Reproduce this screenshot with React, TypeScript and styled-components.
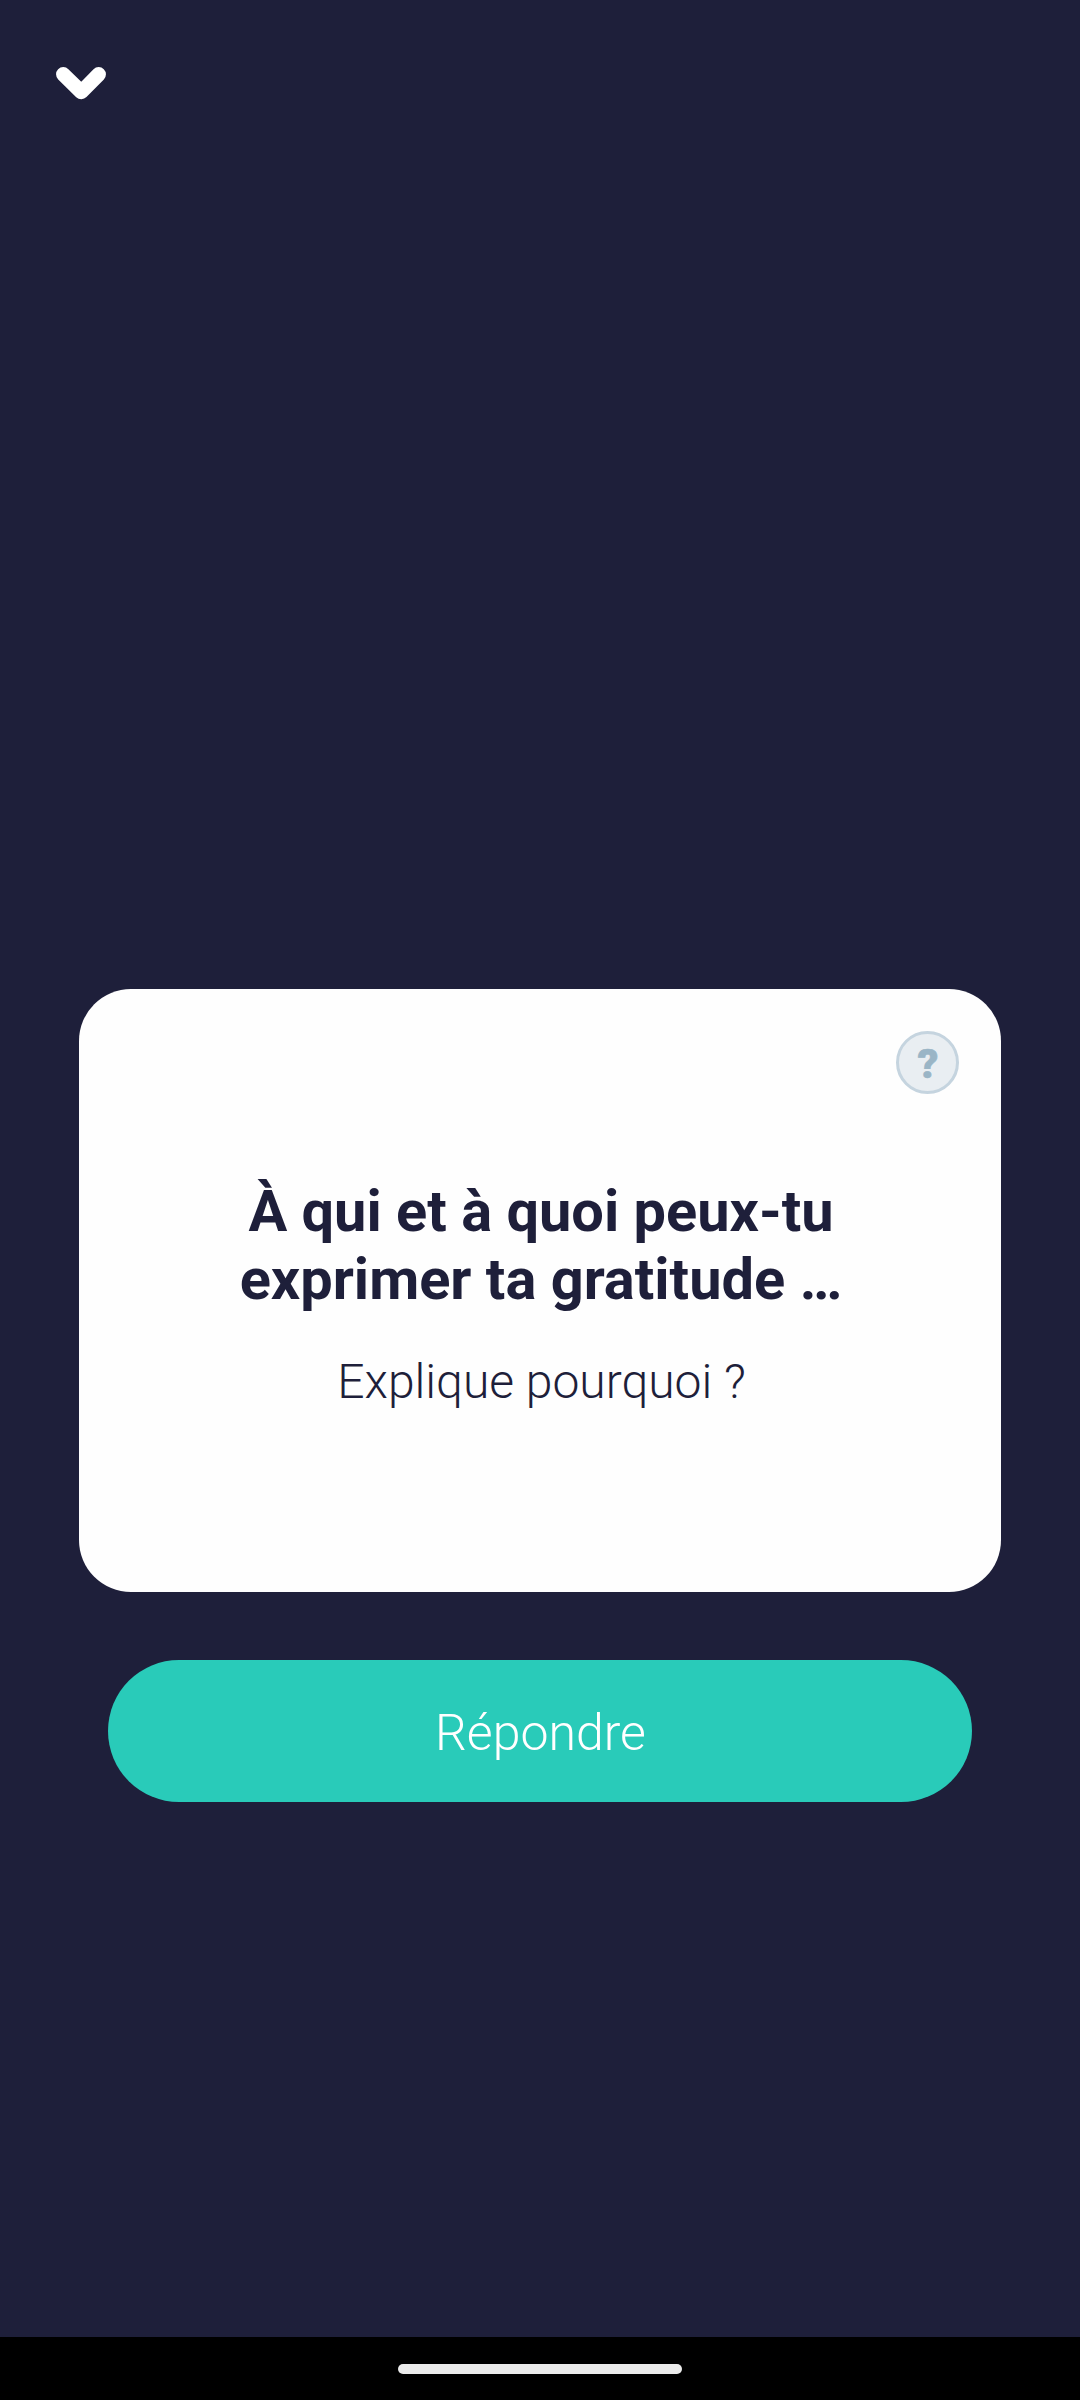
import React from "react";
import styled, { createGlobalStyle } from "styled-components";

const GlobalStyle = createGlobalStyle`
  *, *::before, *::after { box-sizing: border-box; }
  body { margin: 0; background: #1e1f3a; }
`;

const Screen = styled.div`
  display: flex;
  flex-direction: column;
  width: 1080px;
  height: 2400px;
  background: #1e1f3a;
  font-family: Roboto, "Noto Sans", sans-serif;
`;

const TopBar = styled.header`
  height: 166px;
  padding: 64px 53px 0;
`;

const CloseButton = styled.button`
  display: block;
  width: 56px;
  height: 38px;
  padding: 0;
  border: 0;
  background: none;
`;

const Content = styled.main`
  flex: 1;
  display: flex;
  flex-direction: column;
  align-items: center;
  gap: 68px;
  padding-top: 823px;
`;

const Card = styled.section`
  display: flex;
  flex-direction: column;
  width: 922px;
  height: 603px;
  padding: 42px;
  border-radius: 52px;
  background: #fefefe;
  color: #1e1f3a;
  text-align: center;
`;

const HelpButton = styled.button`
  align-self: flex-end;
  display: flex;
  align-items: center;
  justify-content: center;
  width: 63px;
  height: 63px;
  padding: 3px 0 0 1px;
  border: 3px solid #c5d4df;
  border-radius: 50%;
  background: #e9eef2;
  color: #9ab5c6;
  font: 900 41px/1 Roboto, sans-serif;
  -webkit-text-stroke: 0.6px #9ab5c6;
`;

const Title = styled.h1`
  margin: 83px 0 0;
  padding-left: 2px;
  font-size: 57.75px;
  font-weight: 700;
  line-height: 68px;
`;

const Subtitle = styled.p`
  margin: 41px 0 0;
  padding-left: 3px;
  font-size: 48px;
  font-weight: 300;
  line-height: 56px;
`;

const AnswerButton = styled.button`
  width: 864px;
  height: 142px;
  padding: 4px 0 0 1px;
  border: 0;
  border-radius: 71px;
  background: #29cbb9;
  color: #fff;
  font: 300 50px/58px Roboto, "Noto Sans", sans-serif;
`;

const NavigationBar = styled.footer`
  display: flex;
  justify-content: center;
  height: 63px;
  padding-top: 27px;
  background: #000;
`;

const HomeHandle = styled.div`
  width: 284px;
  height: 10px;
  border-radius: 5px;
  background: #ebebeb;
`;

export default function App() {
  return (
    <>
      <GlobalStyle />
      <Screen>
        <TopBar>
          <CloseButton aria-label="Fermer">
            <svg width="56" height="38" viewBox="0 0 56 38" fill="none">
              <path
                d="M10.3 10.3 L28.3 28 L45.7 10.3"
                stroke="#fff"
                strokeWidth="14.5"
                strokeLinecap="round"
                strokeLinejoin="round"
              />
            </svg>
          </CloseButton>
        </TopBar>
        <Content>
          <Card>
            <HelpButton>?</HelpButton>
            <Title>
              À qui et à quoi peux-tu
              <br />
              exprimer ta gratitude …
            </Title>
            <Subtitle>Explique pourquoi ?</Subtitle>
          </Card>
          <AnswerButton>Répondre</AnswerButton>
        </Content>
        <NavigationBar>
          <HomeHandle />
        </NavigationBar>
      </Screen>
    </>
  );
}
